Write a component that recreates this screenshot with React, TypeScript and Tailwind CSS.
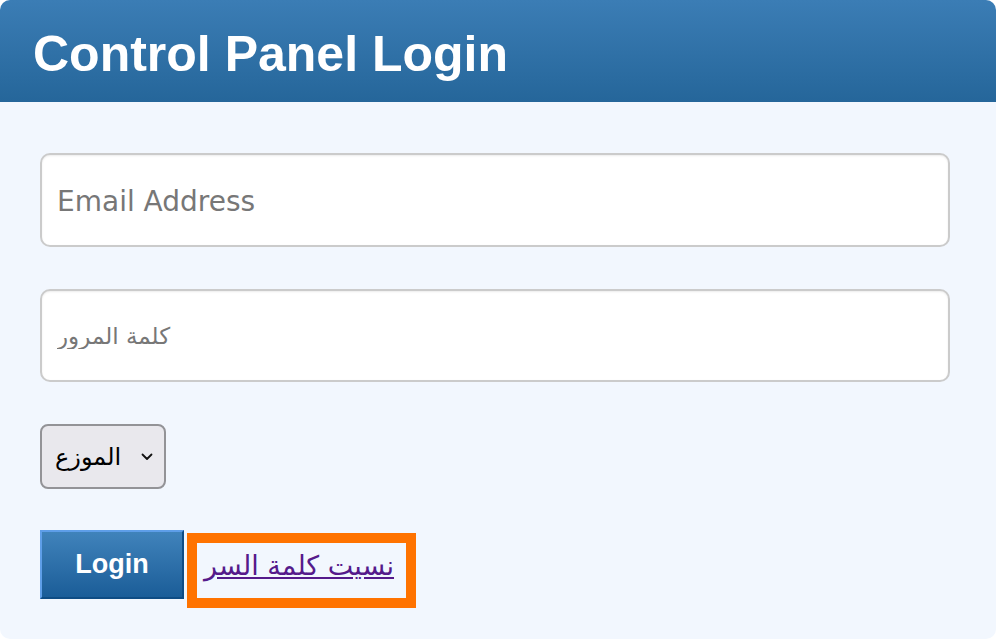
import React from "react";

export default function App() {
  return (
    <div className="w-[996px] h-[639px] bg-white" style={{ fontFamily: '"Liberation Sans", "DejaVu Sans", Arial, sans-serif' }}>
      <div className="h-[639px] rounded-[10px] overflow-hidden bg-[#f2f7fe]">
        <div className="h-[102px] bg-gradient-to-b from-[#3b7db5] to-[#25669a] pl-[33px] pt-[29px]">
          <h1 className="text-[50px] leading-[50px] font-bold text-white">Control Panel Login</h1>
        </div>
        <div className="px-[40px] pt-[51px]">
          <input
            type="text"
            placeholder="Email Address"
            className="block w-[910px] h-[94px] bg-white border-2 border-[#cbcbcb] rounded-[10px] pl-[15px] pt-[2px] text-[28px] font-['DejaVu_Sans',sans-serif] text-black placeholder:text-[#777777] outline-none shadow-[inset_0_1px_2px_rgba(0,0,0,0.08)]"
          />
          <input
            type="password"
            placeholder="كلمة المرور"
            className="mt-[42px] block w-[910px] h-[93px] bg-white border-2 border-[#cbcbcb] rounded-[10px] pl-[15px] text-[23px] font-['DejaVu_Sans',sans-serif] text-black placeholder:text-[#777777] outline-none shadow-[inset_0_1px_2px_rgba(0,0,0,0.08)]"
          />
          <div className="mt-[42px] relative w-[126px] h-[65px]">
            <select className="block appearance-none w-[126px] h-[65px] bg-[#e9e8ed] border-2 border-[#939397] rounded-[8px] pl-[13px] text-[24px] text-black outline-none">
              <option>الموزع</option>
            </select>
            <svg className="absolute left-[101px] top-[29px] pointer-events-none" width="12" height="8" viewBox="0 0 12 8" fill="none">
              <path d="M1.5 1.5 L6 6 L10.5 1.5" stroke="#111" strokeWidth="1.8" strokeLinecap="round" strokeLinejoin="round" />
            </svg>
          </div>
          <div className="mt-[41px] flex items-start">
            <button className="w-[144px] h-[69px] bg-gradient-to-b from-[#4083bb] to-[#1a5d98] border-2 border-t-[#5e9ee8] border-l-[#5e9ee8] border-r-[#0e4c84] border-b-[#0e4c84] text-white font-bold text-[27px]">
              Login
            </button>
            <div className="ml-[3px] mt-[3px] w-[229px] h-[75px] border-[10px] border-[#ff7300] flex items-center pl-[7px] pb-[10px]">
              <a href="#" className="text-[27px] leading-[32px] text-[#551a8b] underline" style={{ fontFamily: '"DejaVu Sans", sans-serif' }}>
                نسيت كلمة السر
              </a>
            </div>
          </div>
        </div>
      </div>
    </div>
  );
}
